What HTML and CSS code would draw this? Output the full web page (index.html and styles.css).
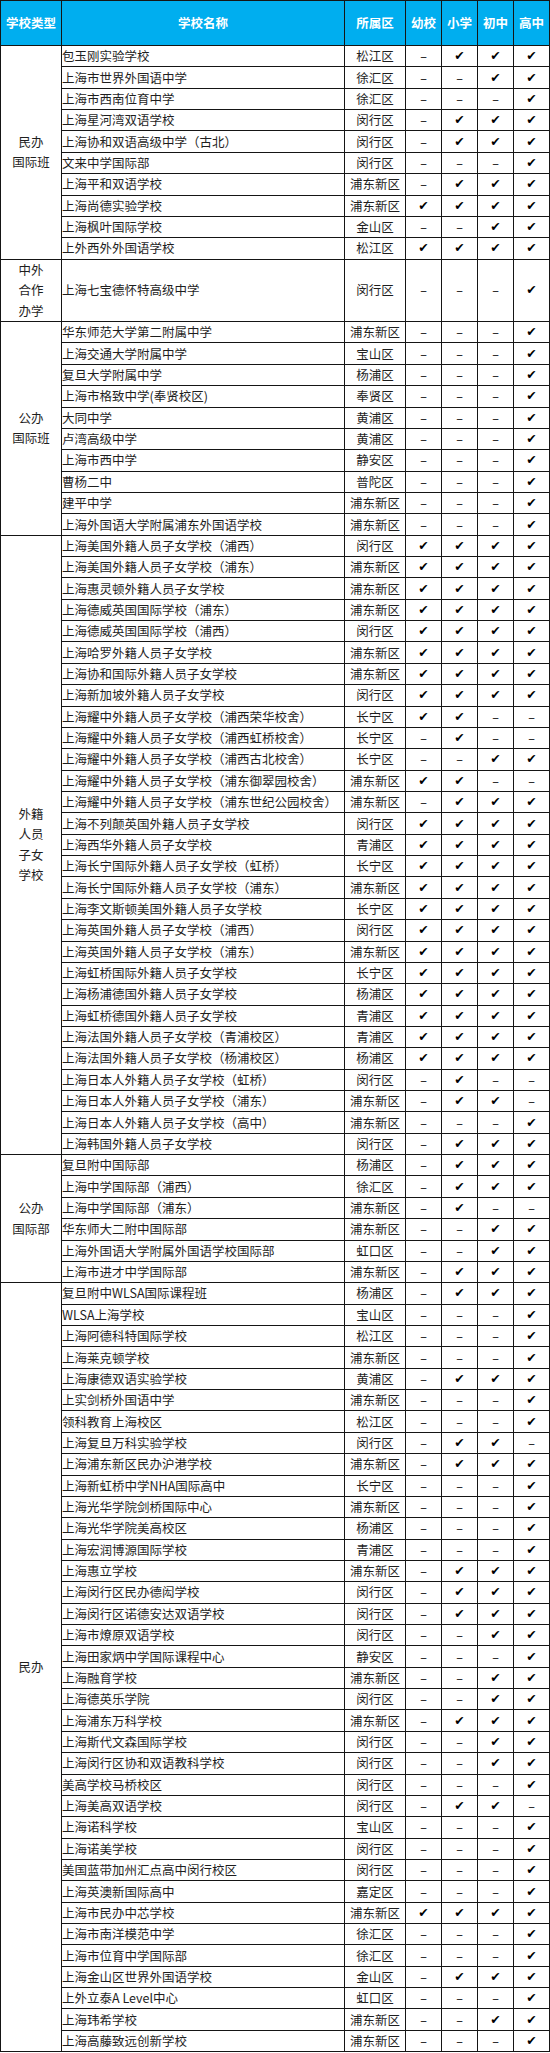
FILE: index.html
```html
<!DOCTYPE html>
<html lang="zh-CN">
<head>
<meta charset="utf-8">
<title>上海国际化学校一览</title>
<link rel="stylesheet" href="styles.css">
</head>
<body>
<table class="schools">
<colgroup>
<col class="c-type"><col class="c-name"><col class="c-dist"><col class="c-lvl"><col class="c-lvl"><col class="c-lvl"><col class="c-lvl">
</colgroup>
<thead>
<tr><th>学校类型</th><th>学校名称</th><th>所属区</th><th>幼校</th><th>小学</th><th>初中</th><th>高中</th></tr>
</thead>
<tbody>
<tr><td class="type" rowspan="10">民办<br>国际班</td><td class="name">包玉刚实验学校</td><td class="dist">松江区</td><td class="na">–</td><td class="ck">✔</td><td class="ck">✔</td><td class="ck">✔</td></tr>
<tr><td class="name">上海市世界外国语中学</td><td class="dist">徐汇区</td><td class="na">–</td><td class="na">–</td><td class="ck">✔</td><td class="ck">✔</td></tr>
<tr><td class="name">上海市西南位育中学</td><td class="dist">徐汇区</td><td class="na">–</td><td class="na">–</td><td class="na">–</td><td class="ck">✔</td></tr>
<tr><td class="name">上海星河湾双语学校</td><td class="dist">闵行区</td><td class="na">–</td><td class="ck">✔</td><td class="ck">✔</td><td class="ck">✔</td></tr>
<tr><td class="name">上海协和双语高级中学（古北）</td><td class="dist">闵行区</td><td class="na">–</td><td class="ck">✔</td><td class="ck">✔</td><td class="ck">✔</td></tr>
<tr><td class="name">文来中学国际部</td><td class="dist">闵行区</td><td class="na">–</td><td class="na">–</td><td class="na">–</td><td class="ck">✔</td></tr>
<tr><td class="name">上海平和双语学校</td><td class="dist">浦东新区</td><td class="na">–</td><td class="ck">✔</td><td class="ck">✔</td><td class="ck">✔</td></tr>
<tr><td class="name">上海尚德实验学校</td><td class="dist">浦东新区</td><td class="ck">✔</td><td class="ck">✔</td><td class="ck">✔</td><td class="ck">✔</td></tr>
<tr><td class="name">上海枫叶国际学校</td><td class="dist">金山区</td><td class="na">–</td><td class="na">–</td><td class="ck">✔</td><td class="ck">✔</td></tr>
<tr><td class="name">上外西外外国语学校</td><td class="dist">松江区</td><td class="ck">✔</td><td class="ck">✔</td><td class="ck">✔</td><td class="ck">✔</td></tr>

<tr class="tall"><td class="type">中外<br>合作<br>办学</td><td class="name">上海七宝德怀特高级中学</td><td class="dist">闵行区</td><td class="na">–</td><td class="na">–</td><td class="na">–</td><td class="ck">✔</td></tr>

<tr><td class="type" rowspan="10">公办<br>国际班</td><td class="name">华东师范大学第二附属中学</td><td class="dist">浦东新区</td><td class="na">–</td><td class="na">–</td><td class="na">–</td><td class="ck">✔</td></tr>
<tr><td class="name">上海交通大学附属中学</td><td class="dist">宝山区</td><td class="na">–</td><td class="na">–</td><td class="na">–</td><td class="ck">✔</td></tr>
<tr><td class="name">复旦大学附属中学</td><td class="dist">杨浦区</td><td class="na">–</td><td class="na">–</td><td class="na">–</td><td class="ck">✔</td></tr>
<tr><td class="name">上海市格致中学(奉贤校区)</td><td class="dist">奉贤区</td><td class="na">–</td><td class="na">–</td><td class="na">–</td><td class="ck">✔</td></tr>
<tr><td class="name">大同中学</td><td class="dist">黄浦区</td><td class="na">–</td><td class="na">–</td><td class="na">–</td><td class="ck">✔</td></tr>
<tr><td class="name">卢湾高级中学</td><td class="dist">黄浦区</td><td class="na">–</td><td class="na">–</td><td class="na">–</td><td class="ck">✔</td></tr>
<tr><td class="name">上海市西中学</td><td class="dist">静安区</td><td class="na">–</td><td class="na">–</td><td class="na">–</td><td class="ck">✔</td></tr>
<tr><td class="name">曹杨二中</td><td class="dist">普陀区</td><td class="na">–</td><td class="na">–</td><td class="na">–</td><td class="ck">✔</td></tr>
<tr><td class="name">建平中学</td><td class="dist">浦东新区</td><td class="na">–</td><td class="na">–</td><td class="na">–</td><td class="ck">✔</td></tr>
<tr><td class="name">上海外国语大学附属浦东外国语学校</td><td class="dist">浦东新区</td><td class="na">–</td><td class="na">–</td><td class="na">–</td><td class="ck">✔</td></tr>

<tr><td class="type" rowspan="29">外籍<br>人员<br>子女<br>学校</td><td class="name">上海美国外籍人员子女学校（浦西）</td><td class="dist">闵行区</td><td class="ck">✔</td><td class="ck">✔</td><td class="ck">✔</td><td class="ck">✔</td></tr>
<tr><td class="name">上海美国外籍人员子女学校（浦东）</td><td class="dist">浦东新区</td><td class="ck">✔</td><td class="ck">✔</td><td class="ck">✔</td><td class="ck">✔</td></tr>
<tr><td class="name">上海惠灵顿外籍人员子女学校</td><td class="dist">浦东新区</td><td class="ck">✔</td><td class="ck">✔</td><td class="ck">✔</td><td class="ck">✔</td></tr>
<tr><td class="name">上海德威英国国际学校（浦东）</td><td class="dist">浦东新区</td><td class="ck">✔</td><td class="ck">✔</td><td class="ck">✔</td><td class="ck">✔</td></tr>
<tr><td class="name">上海德威英国国际学校（浦西）</td><td class="dist">闵行区</td><td class="ck">✔</td><td class="ck">✔</td><td class="ck">✔</td><td class="ck">✔</td></tr>
<tr><td class="name">上海哈罗外籍人员子女学校</td><td class="dist">浦东新区</td><td class="ck">✔</td><td class="ck">✔</td><td class="ck">✔</td><td class="ck">✔</td></tr>
<tr><td class="name">上海协和国际外籍人员子女学校</td><td class="dist">浦东新区</td><td class="ck">✔</td><td class="ck">✔</td><td class="ck">✔</td><td class="ck">✔</td></tr>
<tr><td class="name">上海新加坡外籍人员子女学校</td><td class="dist">闵行区</td><td class="ck">✔</td><td class="ck">✔</td><td class="ck">✔</td><td class="ck">✔</td></tr>
<tr><td class="name">上海耀中外籍人员子女学校（浦西荣华校舍）</td><td class="dist">长宁区</td><td class="ck">✔</td><td class="ck">✔</td><td class="na">–</td><td class="na">–</td></tr>
<tr><td class="name">上海耀中外籍人员子女学校（浦西虹桥校舍）</td><td class="dist">长宁区</td><td class="na">–</td><td class="ck">✔</td><td class="na">–</td><td class="na">–</td></tr>
<tr><td class="name">上海耀中外籍人员子女学校（浦西古北校舍）</td><td class="dist">长宁区</td><td class="na">–</td><td class="na">–</td><td class="ck">✔</td><td class="ck">✔</td></tr>
<tr><td class="name">上海耀中外籍人员子女学校（浦东御翠园校舍）</td><td class="dist">浦东新区</td><td class="ck">✔</td><td class="ck">✔</td><td class="na">–</td><td class="na">–</td></tr>
<tr><td class="name">上海耀中外籍人员子女学校（浦东世纪公园校舍）</td><td class="dist">浦东新区</td><td class="na">–</td><td class="ck">✔</td><td class="ck">✔</td><td class="ck">✔</td></tr>
<tr><td class="name">上海不列颠英国外籍人员子女学校</td><td class="dist">闵行区</td><td class="ck">✔</td><td class="ck">✔</td><td class="ck">✔</td><td class="ck">✔</td></tr>
<tr><td class="name">上海西华外籍人员子女学校</td><td class="dist">青浦区</td><td class="ck">✔</td><td class="ck">✔</td><td class="ck">✔</td><td class="ck">✔</td></tr>
<tr><td class="name">上海长宁国际外籍人员子女学校（虹桥）</td><td class="dist">长宁区</td><td class="ck">✔</td><td class="ck">✔</td><td class="ck">✔</td><td class="ck">✔</td></tr>
<tr><td class="name">上海长宁国际外籍人员子女学校（浦东）</td><td class="dist">浦东新区</td><td class="ck">✔</td><td class="ck">✔</td><td class="ck">✔</td><td class="ck">✔</td></tr>
<tr><td class="name">上海李文斯顿美国外籍人员子女学校</td><td class="dist">长宁区</td><td class="ck">✔</td><td class="ck">✔</td><td class="ck">✔</td><td class="ck">✔</td></tr>
<tr><td class="name">上海英国外籍人员子女学校（浦西）</td><td class="dist">闵行区</td><td class="ck">✔</td><td class="ck">✔</td><td class="ck">✔</td><td class="ck">✔</td></tr>
<tr><td class="name">上海英国外籍人员子女学校（浦东）</td><td class="dist">浦东新区</td><td class="ck">✔</td><td class="ck">✔</td><td class="ck">✔</td><td class="ck">✔</td></tr>
<tr><td class="name">上海虹桥国际外籍人员子女学校</td><td class="dist">长宁区</td><td class="ck">✔</td><td class="ck">✔</td><td class="ck">✔</td><td class="ck">✔</td></tr>
<tr><td class="name">上海杨浦德国外籍人员子女学校</td><td class="dist">杨浦区</td><td class="ck">✔</td><td class="ck">✔</td><td class="ck">✔</td><td class="ck">✔</td></tr>
<tr><td class="name">上海虹桥德国外籍人员子女学校</td><td class="dist">青浦区</td><td class="ck">✔</td><td class="ck">✔</td><td class="ck">✔</td><td class="ck">✔</td></tr>
<tr><td class="name">上海法国外籍人员子女学校（青浦校区）</td><td class="dist">青浦区</td><td class="ck">✔</td><td class="ck">✔</td><td class="ck">✔</td><td class="ck">✔</td></tr>
<tr><td class="name">上海法国外籍人员子女学校（杨浦校区）</td><td class="dist">杨浦区</td><td class="ck">✔</td><td class="ck">✔</td><td class="ck">✔</td><td class="ck">✔</td></tr>
<tr><td class="name">上海日本人外籍人员子女学校（虹桥）</td><td class="dist">闵行区</td><td class="na">–</td><td class="ck">✔</td><td class="na">–</td><td class="na">–</td></tr>
<tr><td class="name">上海日本人外籍人员子女学校（浦东）</td><td class="dist">浦东新区</td><td class="na">–</td><td class="ck">✔</td><td class="ck">✔</td><td class="na">–</td></tr>
<tr><td class="name">上海日本人外籍人员子女学校（高中）</td><td class="dist">浦东新区</td><td class="na">–</td><td class="na">–</td><td class="na">–</td><td class="ck">✔</td></tr>
<tr><td class="name">上海韩国外籍人员子女学校</td><td class="dist">闵行区</td><td class="na">–</td><td class="ck">✔</td><td class="ck">✔</td><td class="ck">✔</td></tr>

<tr><td class="type" rowspan="6">公办<br>国际部</td><td class="name">复旦附中国际部</td><td class="dist">杨浦区</td><td class="na">–</td><td class="ck">✔</td><td class="ck">✔</td><td class="ck">✔</td></tr>
<tr><td class="name">上海中学国际部（浦西）</td><td class="dist">徐汇区</td><td class="na">–</td><td class="ck">✔</td><td class="ck">✔</td><td class="ck">✔</td></tr>
<tr><td class="name">上海中学国际部（浦东）</td><td class="dist">浦东新区</td><td class="na">–</td><td class="ck">✔</td><td class="na">–</td><td class="na">–</td></tr>
<tr><td class="name">华东师大二附中国际部</td><td class="dist">浦东新区</td><td class="na">–</td><td class="na">–</td><td class="ck">✔</td><td class="ck">✔</td></tr>
<tr><td class="name">上海外国语大学附属外国语学校国际部</td><td class="dist">虹口区</td><td class="na">–</td><td class="na">–</td><td class="ck">✔</td><td class="ck">✔</td></tr>
<tr><td class="name">上海市进才中学国际部</td><td class="dist">浦东新区</td><td class="na">–</td><td class="ck">✔</td><td class="ck">✔</td><td class="ck">✔</td></tr>

<tr><td class="type" rowspan="36">民办</td><td class="name">复旦附中WLSA国际课程班</td><td class="dist">杨浦区</td><td class="na">–</td><td class="ck">✔</td><td class="ck">✔</td><td class="ck">✔</td></tr>
<tr><td class="name">WLSA上海学校</td><td class="dist">宝山区</td><td class="na">–</td><td class="na">–</td><td class="na">–</td><td class="ck">✔</td></tr>
<tr><td class="name">上海阿德科特国际学校</td><td class="dist">松江区</td><td class="na">–</td><td class="na">–</td><td class="na">–</td><td class="ck">✔</td></tr>
<tr><td class="name">上海莱克顿学校</td><td class="dist">浦东新区</td><td class="na">–</td><td class="na">–</td><td class="na">–</td><td class="ck">✔</td></tr>
<tr><td class="name">上海康德双语实验学校</td><td class="dist">黄浦区</td><td class="na">–</td><td class="ck">✔</td><td class="ck">✔</td><td class="ck">✔</td></tr>
<tr><td class="name">上实剑桥外国语中学</td><td class="dist">浦东新区</td><td class="na">–</td><td class="na">–</td><td class="na">–</td><td class="ck">✔</td></tr>
<tr><td class="name">领科教育上海校区</td><td class="dist">松江区</td><td class="na">–</td><td class="na">–</td><td class="na">–</td><td class="ck">✔</td></tr>
<tr><td class="name">上海复旦万科实验学校</td><td class="dist">闵行区</td><td class="na">–</td><td class="ck">✔</td><td class="ck">✔</td><td class="na">–</td></tr>
<tr><td class="name">上海浦东新区民办沪港学校</td><td class="dist">浦东新区</td><td class="na">–</td><td class="ck">✔</td><td class="ck">✔</td><td class="ck">✔</td></tr>
<tr><td class="name">上海新虹桥中学NHA国际高中</td><td class="dist">长宁区</td><td class="na">–</td><td class="na">–</td><td class="na">–</td><td class="ck">✔</td></tr>
<tr><td class="name">上海光华学院剑桥国际中心</td><td class="dist">浦东新区</td><td class="na">–</td><td class="na">–</td><td class="na">–</td><td class="ck">✔</td></tr>
<tr><td class="name">上海光华学院美高校区</td><td class="dist">杨浦区</td><td class="na">–</td><td class="na">–</td><td class="na">–</td><td class="ck">✔</td></tr>
<tr><td class="name">上海宏润博源国际学校</td><td class="dist">青浦区</td><td class="na">–</td><td class="na">–</td><td class="na">–</td><td class="ck">✔</td></tr>
<tr><td class="name">上海惠立学校</td><td class="dist">浦东新区</td><td class="na">–</td><td class="ck">✔</td><td class="ck">✔</td><td class="ck">✔</td></tr>
<tr><td class="name">上海闵行区民办德闳学校</td><td class="dist">闵行区</td><td class="na">–</td><td class="ck">✔</td><td class="ck">✔</td><td class="ck">✔</td></tr>
<tr><td class="name">上海闵行区诺德安达双语学校</td><td class="dist">闵行区</td><td class="na">–</td><td class="ck">✔</td><td class="ck">✔</td><td class="ck">✔</td></tr>
<tr><td class="name">上海市燎原双语学校</td><td class="dist">闵行区</td><td class="na">–</td><td class="na">–</td><td class="ck">✔</td><td class="ck">✔</td></tr>
<tr><td class="name">上海田家炳中学国际课程中心</td><td class="dist">静安区</td><td class="na">–</td><td class="na">–</td><td class="na">–</td><td class="ck">✔</td></tr>
<tr><td class="name">上海融育学校</td><td class="dist">浦东新区</td><td class="na">–</td><td class="na">–</td><td class="ck">✔</td><td class="ck">✔</td></tr>
<tr><td class="name">上海德英乐学院</td><td class="dist">闵行区</td><td class="na">–</td><td class="na">–</td><td class="ck">✔</td><td class="ck">✔</td></tr>
<tr><td class="name">上海浦东万科学校</td><td class="dist">浦东新区</td><td class="na">–</td><td class="ck">✔</td><td class="ck">✔</td><td class="ck">✔</td></tr>
<tr><td class="name">上海斯代文森国际学校</td><td class="dist">闵行区</td><td class="na">–</td><td class="na">–</td><td class="ck">✔</td><td class="ck">✔</td></tr>
<tr><td class="name">上海闵行区协和双语教科学校</td><td class="dist">闵行区</td><td class="na">–</td><td class="na">–</td><td class="ck">✔</td><td class="ck">✔</td></tr>
<tr><td class="name">美高学校马桥校区</td><td class="dist">闵行区</td><td class="na">–</td><td class="na">–</td><td class="na">–</td><td class="ck">✔</td></tr>
<tr><td class="name">上海美高双语学校</td><td class="dist">闵行区</td><td class="na">–</td><td class="ck">✔</td><td class="ck">✔</td><td class="na">–</td></tr>
<tr><td class="name">上海诺科学校</td><td class="dist">宝山区</td><td class="na">–</td><td class="na">–</td><td class="na">–</td><td class="ck">✔</td></tr>
<tr><td class="name">上海诺美学校</td><td class="dist">闵行区</td><td class="na">–</td><td class="na">–</td><td class="na">–</td><td class="ck">✔</td></tr>
<tr><td class="name">美国蓝带加州汇点高中闵行校区</td><td class="dist">闵行区</td><td class="na">–</td><td class="na">–</td><td class="na">–</td><td class="ck">✔</td></tr>
<tr><td class="name">上海英澳新国际高中</td><td class="dist">嘉定区</td><td class="na">–</td><td class="na">–</td><td class="na">–</td><td class="ck">✔</td></tr>
<tr><td class="name">上海市民办中芯学校</td><td class="dist">浦东新区</td><td class="ck">✔</td><td class="ck">✔</td><td class="ck">✔</td><td class="ck">✔</td></tr>
<tr><td class="name">上海市南洋模范中学</td><td class="dist">徐汇区</td><td class="na">–</td><td class="na">–</td><td class="na">–</td><td class="ck">✔</td></tr>
<tr><td class="name">上海市位育中学国际部</td><td class="dist">徐汇区</td><td class="na">–</td><td class="na">–</td><td class="na">–</td><td class="ck">✔</td></tr>
<tr><td class="name">上海金山区世界外国语学校</td><td class="dist">金山区</td><td class="na">–</td><td class="ck">✔</td><td class="ck">✔</td><td class="ck">✔</td></tr>
<tr><td class="name">上外立泰A Level中心</td><td class="dist">虹口区</td><td class="na">–</td><td class="na">–</td><td class="na">–</td><td class="ck">✔</td></tr>
<tr><td class="name">上海玮希学校</td><td class="dist">浦东新区</td><td class="na">–</td><td class="na">–</td><td class="ck">✔</td><td class="ck">✔</td></tr>
<tr><td class="name">上海高藤致远创新学校</td><td class="dist">浦东新区</td><td class="na">–</td><td class="na">–</td><td class="na">–</td><td class="ck">✔</td></tr>
</tbody>
</table>
</body>
</html>
```
FILE: styles.css
```css
html, body {
  margin: 0;
  padding: 0;
  background: #ffffff;
}

body {
  font-family: "Noto Sans CJK SC", "Noto Sans", sans-serif;
}

.schools {
  border-collapse: collapse;
  table-layout: fixed;
  width: 550px;
  font-size: 12.5px;
  line-height: 16px;
  color: #1e1e1e;
}

.c-type { width: 61px; }
.c-name { width: 283px; }
.c-dist { width: 61px; }
.c-lvl  { width: 36px; }

.schools th,
.schools td {
  border: 1px solid #151515;
  padding: 0;
  vertical-align: middle;
  white-space: nowrap;
  overflow: hidden;
}

.schools thead th {
  height: 44px;
  background: #00aeef;
  color: #ffffff;
  font-weight: bold;
  text-align: center;
}

.schools tbody tr {
  height: 21.37px;
}

.schools tbody tr.tall {
  height: 62px;
}

.type {
  text-align: center;
  line-height: 20.5px;
}

.name {
  text-align: left;
  padding-left: 2px;
}

.dist,
.na,
.ck {
  text-align: center;
}

.ck {
  font-family: "DejaVu Sans", sans-serif;
  font-size: 12.5px;
  color: #000000;
}

.na {
  color: #000000;
}
```
